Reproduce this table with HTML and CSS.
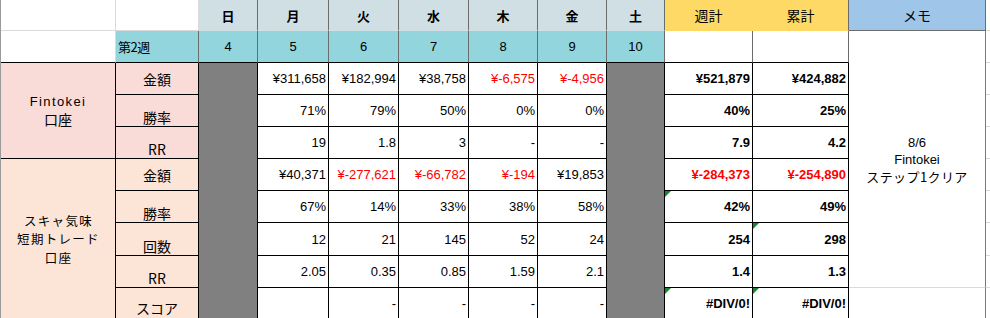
FILE: index.html
```html
<!DOCTYPE html>
<html lang="ja">
<head>
<meta charset="utf-8">
<link rel="stylesheet" href="styles.css">
</head>
<body>
<div class="sheet">
  <!-- row 1 -->
  <div class="c blank"></div>
  <div class="c blank"></div>
  <div class="c hd">日</div>
  <div class="c hd">月</div>
  <div class="c hd">火</div>
  <div class="c hd">水</div>
  <div class="c hd">木</div>
  <div class="c hd">金</div>
  <div class="c hd">土</div>
  <div class="c hs">週計</div>
  <div class="c hs hs-last">累計</div>
  <div class="c hm">メモ</div>
  <div class="c x"></div>

  <!-- row 2 -->
  <div class="c blank blank-b"></div>
  <div class="c wk wk-l">第2週</div>
  <div class="c wk">4</div>
  <div class="c wk">5</div>
  <div class="c wk">6</div>
  <div class="c wk">7</div>
  <div class="c wk">8</div>
  <div class="c wk">9</div>
  <div class="c wk">10</div>
  <div class="c sb"></div>
  <div class="c sb"></div>
  <div class="c memo"><span>8/6</span><span>Fintokei</span><span class="jp">ステップ1クリア</span></div>
  <div class="c x"></div>

  <!-- row 3 -->
  <div class="c acct acct-f span3"><span class="fin">Fintokei</span><span>口座</span></div>
  <div class="c lbl mid f">金額</div>
  <div class="c gray"></div>
  <div class="c v">¥311,658</div>
  <div class="c v">¥182,994</div>
  <div class="c v">¥38,758</div>
  <div class="c v neg">¥-6,575</div>
  <div class="c v neg">¥-4,956</div>
  <div class="c gray"></div>
  <div class="c v b">¥521,879</div>
  <div class="c v b">¥424,882</div>
  <div class="c x"></div>

  <!-- row 4 -->
  <div class="c lbl f">勝率</div>
  <div class="c v">71%</div>
  <div class="c v">79%</div>
  <div class="c v">50%</div>
  <div class="c v">0%</div>
  <div class="c v">0%</div>
  <div class="c v b">40%</div>
  <div class="c v b">25%</div>
  <div class="c x"></div>

  <!-- row 5 -->
  <div class="c lbl f">RR</div>
  <div class="c v">19</div>
  <div class="c v">1.8</div>
  <div class="c v">3</div>
  <div class="c v">-</div>
  <div class="c v">-</div>
  <div class="c v b">7.9</div>
  <div class="c v b">4.2</div>
  <div class="c x"></div>

  <!-- row 6 -->
  <div class="c acct acct-s span5"><p class="acct-text">スキャ気味<br>短期トレード<br>口座</p></div>
  <div class="c lbl mid s">金額</div>
  <div class="c v">¥40,371</div>
  <div class="c v neg">¥-277,621</div>
  <div class="c v neg">¥-66,782</div>
  <div class="c v neg">¥-194</div>
  <div class="c v">¥19,853</div>
  <div class="c v b neg">¥-284,373</div>
  <div class="c v b neg">¥-254,890</div>
  <div class="c x"></div>

  <!-- row 7 -->
  <div class="c lbl s">勝率</div>
  <div class="c v">67%</div>
  <div class="c v">14%</div>
  <div class="c v">33%</div>
  <div class="c v">38%</div>
  <div class="c v">58%</div>
  <div class="c v b tri">42%</div>
  <div class="c v b">49%</div>
  <div class="c x"></div>

  <!-- row 8 -->
  <div class="c lbl s">回数</div>
  <div class="c v">12</div>
  <div class="c v">21</div>
  <div class="c v">145</div>
  <div class="c v">52</div>
  <div class="c v">24</div>
  <div class="c v b">254</div>
  <div class="c v b tri">298</div>
  <div class="c x"></div>

  <!-- row 9 -->
  <div class="c lbl s">RR</div>
  <div class="c v">2.05</div>
  <div class="c v">0.35</div>
  <div class="c v">0.85</div>
  <div class="c v">1.59</div>
  <div class="c v">2.1</div>
  <div class="c v b">1.4</div>
  <div class="c v b">1.3</div>
  <div class="c x"></div>

  <!-- row 10 -->
  <div class="c lbl s lbl-last">スコア</div>
  <div class="c v"></div>
  <div class="c v">-</div>
  <div class="c v">-</div>
  <div class="c v">-</div>
  <div class="c v">-</div>
  <div class="c v b tri">#DIV/0!</div>
  <div class="c v b tri">#DIV/0!</div>
  <div class="c memo2"></div>
  <div class="c x"></div>
</div>
</body>
</html>
```

FILE: styles.css
```css
html, body {
  margin: 0;
  padding: 0;
  background: #ffffff;
}

body {
  font-family: "Liberation Sans", "Noto Sans CJK JP", sans-serif;
  font-size: 13px;
  color: #000;
  overflow: hidden;
}

.sheet {
  display: grid;
  grid-template-columns: 115px 83px 59px 71px 70px 70px 69px 69px 58px 88px 96px 137px 1fr;
  grid-template-rows: 31px 32px 32px 32px 32px 32px 32px 33px 32px 32px;
  border-left: 1px solid #9a9a9a;
  width: 989px;
}

.c {
  box-sizing: border-box;
  border-right: 1px solid #000;
  border-bottom: 1px solid #000;
  display: flex;
  align-items: center;
  padding: 0 2px;
  white-space: nowrap;
  position: relative;
  line-height: 1;
}

/* blank top-left cells */
.blank {
  border-right-color: #dadada;
  border-bottom-color: #dadada;
}
.blank-b {
  border-bottom-color: #000;
}

/* day headers */
.hd {
  background: #d0dfe3;
  border-right-color: #6c6c6c;
  border-bottom-color: #d0dfe3;
  justify-content: center;
  font-weight: bold;
  font-family: "Noto Sans CJK JP", sans-serif;
  font-size: 13px;
}

.hs {
  background: #ffd966;
  border-right-color: #ffd966;
  border-bottom-color: #ffd966;
  justify-content: center;
  font-family: "Noto Sans CJK JP", sans-serif;
  font-size: 14px;
}
.hs-last {
  border-right-color: #6c6c6c;
}

.hm {
  background: #9fc5e8;
  border-right-color: #6c6c6c;
  border-bottom-color: #6c6c6c;
  justify-content: center;
  font-family: "Noto Sans CJK JP", sans-serif;
  font-size: 14px;
}

/* week row */
.wk {
  background: #92d5dc;
  border-right-color: #6c6c6c;
  justify-content: center;
}
.wk-l {
  justify-content: flex-start;
  font-family: "Noto Sans CJK JP", sans-serif;
  letter-spacing: -0.5px;
}

.sb {
  border-right-color: #6c6c6c;
}

/* memo */
.memo {
  grid-row: span 8;
  border-right-color: #7a7a7a;
  border-bottom-color: #dadada;
  flex-direction: column;
  justify-content: center;
  gap: 4px;
  line-height: 13px;
  padding-top: 1px;
}
.memo .jp {
  font-family: "Noto Sans CJK JP", sans-serif;
  font-size: 13px;
  letter-spacing: 0.4px;
}
.memo2 {
  border-right-color: #7a7a7a;
  border-bottom-color: #dadada;
}

.x {
  border-right: none;
  border-bottom-color: #dadada;
}

/* account label column */
.acct {
  flex-direction: column;
  justify-content: center;
  font-family: "Noto Sans CJK JP", sans-serif;
  font-size: 14px;
  line-height: 17px;
  gap: 1px;
}
.acct-f {
  background: #f9dbd8;
}
.acct-s {
  background: #fce4d6;
  padding-top: 1px;
}
.acct-text {
  margin: 0;
  text-align: center;
  font-size: 12.5px;
  line-height: 18.2px;
  letter-spacing: 1.3px;
  padding-left: 1px;
}
.span3 {
  grid-row: span 3;
}
.span5 {
  grid-row: span 5;
}
.fin {
  font-family: "Liberation Sans", sans-serif;
  font-size: 13px;
  letter-spacing: 1.4px;
}

/* row labels */
.lbl {
  justify-content: center;
  align-items: flex-end;
  padding-bottom: 2px;
  font-family: "Noto Sans CJK JP", sans-serif;
  font-size: 14px;
}
.lbl.mid {
  align-items: center;
  padding-bottom: 0;
}
.lbl-last {
  padding-bottom: 4px;
}
.f {
  background: #f9dbd8;
}
.s {
  background: #fce4d6;
}

.gray {
  grid-row: span 8;
  background: #808080;
}

/* values */
.v {
  justify-content: flex-end;
  padding-right: 2px;
}
.neg {
  color: #ff0000;
}
.b {
  font-weight: bold;
}

.tri::before {
  content: "";
  position: absolute;
  top: 0;
  left: 0;
  width: 0;
  height: 0;
  border-top: 6px solid #17852e;
  border-right: 6px solid transparent;
}
```
